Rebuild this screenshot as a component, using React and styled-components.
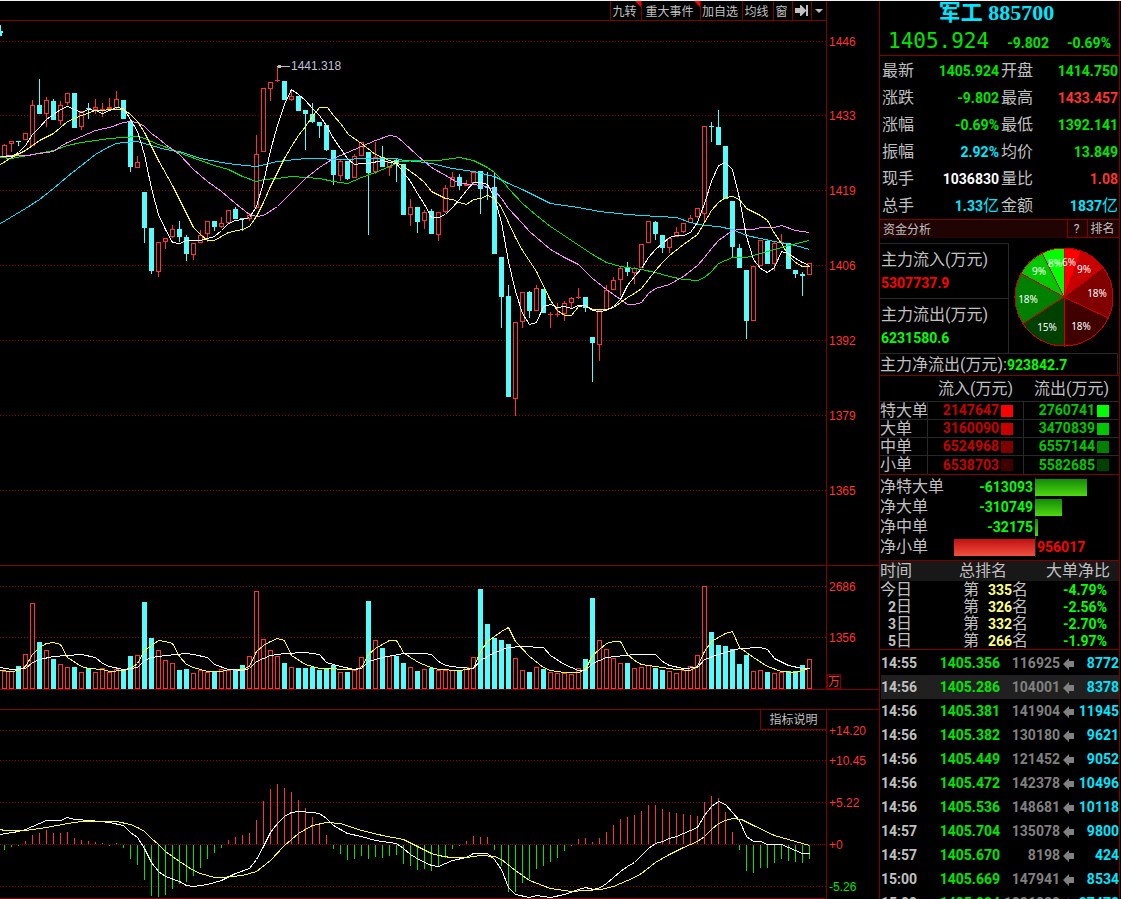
import styled, { createGlobalStyle, css } from 'styled-components'

const LINE = '#800000'
const FAINT = '#282828'
const UP = '#ff3232'
const DOWN = '#54fcfc'
const GREEN = '#00e600'
const LIME = '#00ff00'
const CYAN = '#00e6ff'
const GREY = '#c0c0c0'

const GlobalStyle = createGlobalStyle`
  * {
    box-sizing: border-box;
  }
  body {
    margin: 0;
    background: black;
    color: ${GREY};
    overflow: hidden;
    font-family: Roboto, 'Noto Sans CJK SC', sans-serif;
  }
  button {
    font: inherit;
    color: inherit;
    background: transparent;
    border: 0;
    margin: 0;
    padding: 0;
    cursor: pointer;
  }
  table {
    border-collapse: separate;
    border-spacing: 0;
    table-layout: fixed;
    width: 100%;
  }
  td, th {
    padding: 0;
    font-weight: normal;
    text-align: left;
    white-space: nowrap;
  }
  h1, h2, dl, dt, dd, p {
    margin: 0;
    font-weight: normal;
  }
`

const Page = styled.div`
  display: flex;
  height: 100vh;
  border-top: 1px solid #f0f0f0;
  padding-right: 1px;
  overflow: hidden;
`

const Charts = styled.main`
  flex: 1;
  min-width: 0;
`

const ChartRow = styled.div`
  display: grid;
  grid-template-columns: minmax(0, 1fr) 52px;
`

const Toolbar = styled.div`
  display: flex;
  justify-content: flex-end;
  height: 20px;
  border-right: 1px solid ${LINE};
  border-bottom: 1px solid ${LINE};
`

const ToolButton = styled.button`
  position: relative;
  display: flex;
  align-items: center;
  justify-content: center;
  width: ${props => props.$width}px;
  border-left: 1px solid ${LINE};
  padding: 2px 3px 0 0;
  font-size: 12px;
  line-height: 18px;
  white-space: nowrap;
  svg {
    margin: 0 0 2px 2px;
  }
  ${props => props.$flag && css`
    &::after {
      content: '';
      position: absolute;
      top: 0;
      right: 0;
      border-top: 6px solid red;
      border-left: 6px solid transparent;
    }
  `}
`

const Plot = styled.div`
  position: relative;
  border-right: 1px solid ${LINE};
  border-top: ${props => props.$top ? `1px solid ${LINE}` : '0'};
  border-bottom: 1px solid ${LINE};
  svg {
    display: block;
    width: 100%;
  }
`

const Axis = styled.div`
  border-top: ${props => props.$top ? `1px solid ${LINE}` : '0'};
  border-bottom: ${props => props.$bottom ? `1px solid ${LINE}` : '0'};
  svg {
    display: block;
  }
  text {
    font-family: 'Liberation Sans', 'Noto Sans CJK SC', sans-serif;
    font-size: 12px;
  }
`

const Gap = styled.div`
  height: 19px;
`

const HelpButton = styled.button`
  position: absolute;
  top: 0;
  right: 0;
  width: 66px;
  height: 20px;
  border-left: 1px solid ${LINE};
  border-bottom: 1px solid ${LINE};
  padding-top: 1px;
  background: black;
  font-size: 12px;
  line-height: 19px;
`

const Side = styled.aside`
  display: flex;
  flex-direction: column;
  width: 241px;
  border-left: 1px solid ${LINE};
  border-right: 1px solid ${LINE};
`

const Title = styled.h1`
  height: 26px;
  font-family: 'Liberation Serif', 'Noto Sans CJK SC', serif;
  font-size: 22px;
  font-weight: bold;
  line-height: 24px;
  text-align: center;
  padding-right: 6px;
  color: ${CYAN};
`

const PriceLine = styled.div`
  display: flex;
  align-items: center;
  justify-content: space-between;
  height: 29px;
  padding: 4px 8px 0 8px;
  border-bottom: 1px solid ${LINE};
  color: ${GREEN};
  font-size: 14px;
  font-weight: bold;
`

const Price = styled.span`
  font-family: 'DejaVu Sans Mono', monospace;
  font-size: 21px;
  font-weight: normal;
  padding-bottom: 4px;
`

const Quotes = styled.dl`
  display: grid;
  grid-template-columns: 119px 119px;
  padding-top: 1px;
  border-bottom: 1px solid ${LINE};
`

const Quote = styled.div`
  display: flex;
  justify-content: space-between;
  align-items: center;
  height: 27px;
  padding-left: 2px;
  font-size: 16px;
  line-height: 27px;
`

const Num = styled.span`
  font-size: 14px;
  font-weight: bold;
  color: ${props => props.$color};
`

const Unit = styled.span`
  font-size: 16px;
  font-weight: normal;
`

const SectionBar = styled.div`
  display: flex;
  height: 18px;
  background: #200404;
  font-size: 12px;
  h2 {
    flex: 1;
    padding-left: 3px;
    font-size: 12px;
    line-height: 20px;
  }
  button {
    border-left: 1px solid ${LINE};
    border-bottom: 1px solid ${LINE};
    padding: 1px 2px 0 0;
    line-height: 17px;
  }
`

const BarButton = styled.button`
  width: ${props => props.$width}px;
`

const Flow = styled.div`
  display: grid;
  grid-template-columns: 129px 1fr;
  margin-top: 5px;
`

const FlowCell = styled.div`
  height: 55px;
  border-top: 1px solid ${FAINT};
  border-right: 1px solid ${FAINT};
  padding: 4px 0 0 1px;
  font-size: 16px;
  line-height: 24px;
  p {
    height: 24px;
  }
  ${Num} {
    display: block;
    line-height: 22px;
  }
`

const Pie = styled.svg`
  display: block;
  text {
    font-family: 'Noto Sans', sans-serif;
    font-size: 10px;
    fill: white;
    text-anchor: middle;
  }
`

const NetFlow = styled.div`
  height: 22px;
  margin-right: 1px;
  border-top: 1px solid ${FAINT};
  border-right: 1px solid ${FAINT};
  font-size: 16px;
  line-height: 21px;
  white-space: nowrap;
`

const OrderTable = styled.table`
  border-top: 1px solid ${LINE};
  border-bottom: 1px solid ${LINE};
  font-size: 16px;
  th, td {
    height: 18px;
    line-height: 17px;
    border-top: 1px solid ${FAINT};
  }
  td, tbody th {
    border-left: 1px solid ${FAINT};
  }
  tbody th {
    border-left: 0;
  }
  tbody tr:last-child > * {
    height: 19px;
    line-height: 18px;
  }
  thead th {
    height: 25px;
    line-height: 25px;
    padding-left: 11px;
    border-top: 0;
  }
`

const Amount = styled.div`
  display: flex;
  align-items: center;
  justify-content: flex-end;
  gap: 2px;
  padding-right: ${props => props.$pad}px;
`

const Swatch = styled.i`
  width: 12px;
  height: 12px;
  background: ${props => props.$color};
`

const NetList = styled.dl`
  height: 86px;
  padding-top: 2px;
  border-bottom: 1px solid ${LINE};
`

const NetRow = styled.div`
  display: grid;
  grid-template-columns: 155px 1fr;
  height: 20px;
  font-size: 16px;
  line-height: 20px;
  > dt, > dd {
    grid-row: 1;
  }
  > dt {
    grid-column: 1;
  }
`

const NetSide = styled.dd`
  grid-column: ${props => props.$right ? 2 : 1};
  display: flex;
  align-items: center;
  justify-content: ${props => props.$right ? 'flex-start' : 'flex-end'};
  border-left: ${props => props.$right ? `1px solid ${FAINT}` : '0'};
  padding-right: ${props => props.$text ? 2 : 0}px;
  > span {
    padding-left: 1px;
  }
`

const NetBar = styled.div`
  height: 17px;
  margin-left: -1px;
  background: ${props => props.$up
    ? 'linear-gradient(#c01010, #f05040)'
    : 'linear-gradient(#128a08, #50d810)'};
`

const RankTable = styled.table`
  border-bottom: 1px solid ${LINE};
  font-size: 16px;
  thead th {
    height: 20px;
    line-height: 20px;
    background: #181818;
  }
  td {
    height: 17px;
    line-height: 17px;
  }
`

const Day = styled.div`
  width: 32px;
  height: 17px;
  text-align: right;
`

const Place = styled.div`
  height: 17px;
  display: flex;
  justify-content: space-between;
  width: 69px;
`

const Right = styled.div`
  text-align: right;
  height: 17px;
  padding-right: 12px;
`

const Ticks = styled.div`
  flex: 1 1 0;
  min-height: 0;
  overflow: hidden;
  padding: 1px 0 0 1px;
`

const Tick = styled.tr`
  background: ${props => props.$active ? '#202020' : 'transparent'};
  font-size: 14px;
  font-weight: bold;
  td {
    height: 24px;
    line-height: 24px;
    font-weight: bold;
    text-align: right;
  }
  td:first-child {
    text-align: left;
  }
  svg {
    display: block;
    margin: 2px auto 0;
  }
`

const TickCell = styled.td`
  color: ${props => props.$color};
`

// One candle per row: rising, body top, body bottom, high, low
const candles = [
  [1,145,158,144,158],[1,141,144,141,152],[0,141,142,141,146],[1,133,140,133,140],[1,105,146,100,146],
  [0,105,114,79,114],[1,100,114,97,127],[0,101,120,99,120],[1,105,121,101,125],[1,93,103,93,105],
  [0,93,128,93,128],[1,111,127,111,130],[0,108,109,103,119],[1,107,110,99,114],[1,109,110,103,117],
  [1,107,109,98,109],[1,99,108,91,109],[0,100,119,100,119],[0,121,167,121,172],[1,162,168,156,168],
  [0,192,228,192,243],[0,228,271,228,274],[1,242,272,242,277],[1,238,242,238,249],[1,229,237,225,238],
  [0,229,237,221,242],[0,237,254,235,261],[1,243,255,243,260],[1,235,243,230,243],[1,221,234,221,242],
  [0,221,227,221,231],[1,223,227,217,228],[1,210,223,210,223],[0,209,219,207,219],[0,218,219,218,231],
  [1,215,219,213,221],[1,154,208,135,209],[1,88,152,88,152],[1,82,89,82,101],[1,80,81,66,82],
  [0,81,100,81,100],[1,96,100,91,101],[0,96,111,96,111],[0,110,114,110,150],[0,114,122,103,123],
  [0,122,126,122,138],[0,125,150,125,151],[0,150,175,150,185],[1,161,176,159,181],[0,161,179,161,180],
  [1,156,178,154,178],[1,142,156,142,156],[0,152,173,152,235],[1,157,172,142,174],[0,157,167,146,167],
  [1,162,168,162,176],[0,160,163,159,182],[0,164,215,164,215],[1,207,215,199,226],[0,207,222,207,233],
  [1,212,221,210,229],[0,211,234,209,234],[1,212,235,212,241],[1,188,212,185,213],[1,177,187,172,187],
  [0,177,186,174,190],[1,184,186,180,186],[1,172,183,172,184],[0,171,189,171,214],[0,187,188,172,200],
  [0,187,254,173,254],[0,257,297,257,328],[0,296,397,285,397],[1,322,399,322,416],[1,292,322,292,328],
  [0,292,311,291,318],[1,288,311,285,311],[0,289,313,289,313],[1,314,315,312,328],[1,314,315,303,317],
  [1,303,314,301,321],[1,298,303,297,308],[1,297,298,288,299],[0,297,308,297,312],[0,337,343,337,382],
  [1,310,345,310,361],[1,290,310,285,310],[1,280,290,277,290],[1,268,280,267,296],[0,267,272,262,276],
  [1,268,273,267,284],[1,244,268,244,268],[1,221,243,221,243],[0,222,234,221,240],[0,235,248,235,253],
  [1,238,248,238,253],[1,232,237,227,237],[1,223,232,223,233],[1,218,223,215,223],[1,208,217,208,218],
  [1,126,214,126,223],[0,126,127,122,142],[0,127,145,110,145],[0,146,199,146,199],[0,201,247,201,258],
  [0,248,268,244,268],[0,270,321,270,339],[1,266,321,266,321],[1,240,266,240,266],[0,241,264,241,264],
  [1,243,264,241,271],[1,242,243,234,243],[0,243,269,243,269],[0,270,274,270,278],[0,274,276,272,296],
  [1,263,275,263,275],
]

const volumes = [
  671,671,666,654,603,642,650,659,664,667,667,672,668,672,668,672,669,670,656,655,602,638,650,660,663,
  670,669,673,670,672,671,669,670,670,665,656,591,639,650,656,663,667,668,668,667,670,669,665,672,672,
  670,657,601,640,648,656,656,663,667,671,669,668,670,670,670,670,667,657,589,624,638,640,644,658,670,
  672,667,669,672,673,673,674,668,659,598,640,649,658,663,663,668,667,665,668,670,671,673,670,666,655,
  586,632,645,646,649,664,655,671,670,672,673,672,671,671,665,659,
]

const macd = [
  850,847,845,841,835,833,830,833,833,832,838,840,841,842,843,845,843,848,859,865,880,896,897,895,889,
  884,882,876,868,859,853,848,840,837,835,833,820,801,789,784,788,792,800,808,817,825,835,849,854,860,
  859,856,859,857,858,856,855,864,866,870,869,871,867,858,849,845,841,836,837,837,850,866,892,892,883,
  879,869,866,862,858,851,845,839,838,842,838,832,825,819,817,815,811,805,805,809,812,813,814,815,816,
  802,796,798,812,832,850,871,873,868,868,863,859,861,862,863,859,
]

const priceLines = [
  ['#00e6ff', '0,223 25,208 39,199 53,188 67,176 81,165 95,154 109,146 116,143 123,142 137,141 151,145 165,149 179,151 200,158 221,162 235,164 256,166 277,161 305,158 347,159 361,158 396,158 403,160 417,161 431,163 452,168 473,171 494,176 508,183 522,189 536,196 550,203 564,205 578,207 599,211 627,214 641,215 676,217 690,222 704,225 718,226 732,229 746,235 760,238 774,241 795,245 809,249'],
  ['#00e600', '0,157 11,158 32,154 53,150 67,145 81,142 95,140 109,138 137,136 144,138 158,144 172,149 186,155 200,160 214,165 228,169 242,176 256,181 263,179 277,178 291,176 319,178 333,181 347,183 361,177 375,172 389,166 400,161 417,160 438,160 459,157 473,160 487,167 494,172 501,179 508,188 522,203 536,215 550,226 571,240 592,254 606,262 620,266 641,269 655,272 669,276 683,279 697,280 704,277 711,271 718,263 732,257 746,257 760,253 774,249 788,245 809,240'],
  ['#ff8cff', '0,156 11,155 27,155 39,153 53,151 60,146 67,142 81,136 95,130 109,127 123,122 130,121 137,122 144,126 151,133 158,138 165,144 179,154 193,169 207,181 221,191 235,203 249,214 256,216 263,215 277,206 291,192 305,178 319,167 333,158 347,152 361,146 375,140 389,135 396,136 403,142 417,155 431,167 445,175 459,183 473,184 487,186 494,190 501,198 508,208 522,223 529,231 536,237 550,249 564,257 578,264 592,278 606,289 620,299 627,304 634,304 641,302 648,293 655,288 669,284 683,276 697,265 704,257 711,248 718,240 732,230 739,229 753,229 760,227 774,227 781,225 795,230 809,232'],
  ['#ffff20', '0,164 11,157 25,150 39,140 53,133 67,121 81,115 95,110 102,110 109,109 123,109 130,114 137,121 144,132 158,160 172,185 186,213 193,227 200,234 207,240 214,240 221,236 228,232 242,229 249,226 256,216 263,202 270,186 277,172 284,158 291,146 298,135 305,126 312,116 319,107 327,107 333,115 340,123 348,134 361,143 375,154 389,160 396,162 403,166 410,171 417,176 424,182 431,191 445,198 452,199 459,202 466,204 473,199 480,198 487,195 494,198 501,207 508,222 515,237 522,250 536,271 550,300 557,310 564,315 571,315 578,306 585,305 592,309 606,309 613,307 620,302 627,297 634,293 641,288 648,279 655,270 662,262 669,255 683,244 697,234 704,222 711,210 718,202 725,197 732,196 739,199 746,208 760,215 767,220 774,233 781,243 788,255 795,262 802,266 809,266'],
  ['#ffffff', '0,156 11,156 18,152 25,145 32,134 39,127 46,119 53,114 60,109 67,106 74,109 81,112 88,109 95,110 102,113 109,110 116,107 123,108 130,119 137,131 144,154 151,188 158,214 165,229 172,242 179,243 186,240 200,240 207,238 214,236 221,230 228,223 235,220 242,219 249,217 256,206 263,182 270,150 277,125 284,104 291,89 298,94 305,100 312,108 319,115 326,125 333,138 340,148 347,158 354,164 361,163 368,163 382,160 389,162 396,163 403,172 410,181 417,193 424,204 431,217 438,217 445,214 452,207 459,199 466,190 473,182 480,182 487,184 494,197 501,222 508,261 515,291 522,313 529,324 536,322 543,306 550,304 557,307 564,306 571,308 578,305 585,305 592,310 599,311 606,310 613,306 620,299 627,285 634,276 641,268 648,257 655,249 662,243 669,237 676,235 683,235 690,232 697,222 704,203 711,181 718,165 725,162 732,169 739,198 746,236 753,259 760,268 767,272 774,267 781,251 788,253 795,258 802,262 809,265'],
]

const volumeLines = [
  ['#ffff20', '0,670 11,671 18,670 25,666 32,654 39,647 46,643 53,642 60,644 67,657 81,666 88,668 102,669 109,671 123,670 130,668 137,663 144,650 151,645 158,640 165,641 172,643 179,656 186,664 193,667 207,671 221,671 228,669 242,669 249,666 256,651 263,645 270,641 277,638 284,640 291,655 305,664 319,668 354,669 361,667 368,654 375,648 382,644 389,640 396,640 403,652 410,657 420,663 431,667 438,669 459,670 473,668 480,651 487,641 494,636 501,631 508,627 515,641 529,656 543,667 550,670 564,672 578,672 585,669 592,655 599,649 606,643 613,641 620,641 627,654 634,660 641,664 655,666 676,669 690,670 697,666 704,651 711,641 718,637 725,633 732,631 739,647 753,657 767,666 781,671 795,672 802,670 808,668'],
  ['#ffffff', '0,667 11,669 25,668 32,662 39,659 53,656 67,655 81,654 95,657 102,663 109,666 123,669 137,667 144,660 151,657 165,655 186,653 193,654 207,657 214,664 228,669 242,670 249,668 256,661 270,655 284,653 305,652 319,654 326,662 340,666 354,669 361,668 368,661 382,657 403,653 424,653 431,654 438,661 445,665 459,667 473,668 480,660 494,652 508,647 522,646 543,647 550,655 564,664 578,670 585,670 592,663 606,657 634,654 655,654 662,661 669,665 683,668 697,667 704,659 718,654 739,648 760,647 767,649 774,658 788,665 802,668 809,668'],
]

const macdLines = [
  ['#ffffff', '0,834 18,831 25,829 32,826 46,820 60,820 67,817 74,819 90,820 109,822 123,825 130,832 137,837 144,848 151,862 158,871 165,876 179,881 186,885 193,886 207,884 221,880 235,873 249,868 256,859 263,846 270,832 277,823 284,816 291,812 298,811 312,812 319,813 326,818 333,825 347,833 361,836 375,840 396,843 403,848 410,854 420,860 431,865 438,866 452,860 466,857 473,853 487,853 494,859 501,869 508,887 515,894 529,897 536,895 550,897 564,894 578,889 585,887 593,889 600,887 606,883 613,877 620,871 627,866 634,862 641,855 648,848 655,843 662,841 669,838 676,836 697,827 704,815 711,806 718,801 725,804 732,812 739,820 746,836 753,841 760,841 767,844 781,844 795,850 802,853 809,853'],
  ['#ffff20', '0,829 4,830 25,830 46,827 67,823 81,821 116,821 130,824 137,827 144,831 151,838 158,844 165,851 179,861 193,870 200,873 214,877 221,877 242,875 256,871 270,860 284,845 298,833 312,825 326,822 340,823 361,830 382,835 403,839 417,846 431,853 438,855 450,857 466,857 480,855 494,856 501,859 515,870 529,880 550,888 571,891 585,890 600,889 613,886 634,877 641,873 655,862 669,854 683,847 697,841 704,836 711,829 718,823 725,820 732,818 741,819 753,825 774,835 795,841 809,845'],
]

const priceAxis = [[41, '1446'], [115, '1433'], [190, '1419'], [265, '1406'], [340, '1392'], [415, '1379'], [490, '1365']]
const volumeAxis = [[586, '2686'], [637, '1356']]
const macdAxis = [[730, '+14.20'], [760, '+10.45'], [802, '+5.22'], [844, '+0'], [886, '-5.26']]

const quotes = [
  ['最新', '1405.924', GREEN], ['开盘', '1414.750', GREEN],
  ['涨跌', '-9.802', GREEN], ['最高', '1433.457', UP],
  ['涨幅', '-0.69%', GREEN], ['最低', '1392.141', GREEN],
  ['振幅', '2.92%', CYAN], ['均价', '13.849', GREEN],
  ['现手', '1036830', '#ffffff'], ['量比', '1.08', UP],
  ['总手', '1.33', CYAN, '亿'], ['金额', '1837', CYAN, '亿'],
]

const orders = [
  ['特大单', '2147647', '#ff0000', '2760741', '#00ff00'],
  ['大单', '3160090', '#c80000', '3470839', '#00c800'],
  ['中单', '6524968', '#800000', '6557144', '#008000'],
  ['小单', '6538703', '#400000', '5582685', '#004000'],
]

const nets = [
  ['净特大单', '-613093', 52],
  ['净大单', '-310749', 27],
  ['净中单', '-32175', 3],
  ['净小单', '956017', 81, true],
]

const ranks = [
  ['今', '335', '-4.79%'],
  ['2', '326', '-2.56%'],
  ['3', '332', '-2.70%'],
  ['5', '266', '-1.97%'],
]

const ticks = [
  ['14:55', '1405.356', '116925', '8772'],
  ['14:56', '1405.286', '104001', '8378'],
  ['14:56', '1405.381', '141904', '11945'],
  ['14:56', '1405.382', '130180', '9621'],
  ['14:56', '1405.449', '121452', '9052'],
  ['14:56', '1405.472', '142378', '10496'],
  ['14:56', '1405.536', '148681', '10118'],
  ['14:57', '1405.704', '135078', '9800'],
  ['14:57', '1405.670', '8198', '424'],
  ['15:00', '1405.669', '147941', '8534'],
  ['15:00', '1405.924', '1036830', '27478'],
]

// end angle, fill, label, label x, label y
const slices = [
  [20.5, '#ff0000', '6%', 60, 20],
  [52.8, '#c80000', '9%', 75, 27],
  [115.5, '#800000', '18%', 88, 51],
  [180, '#400000', '18%', 72, 84],
  [236.9, '#004000', '15%', 38, 85],
  [298.7, '#008000', '18%', 19, 57],
  [333.4, '#00c800', '9%', 30, 29],
  [360, '#00ff00', '8%', 46, 21],
]

const candleX = i => 4 + 7 * i

const Grid = ({ levels }) => levels.map(([y]) =>
  <line key={y} x1="0" x2="826" y1={y + 0.5} y2={y + 0.5} stroke="#900000" strokeDasharray={y === 844 ? '1 1' : '1 2'} />
)

const Lines = ({ lines }) => (
  <g transform="translate(0.5 0.5)" fill="none">
    {lines.map(([color, points]) => <polyline key={color} points={points} stroke={color} />)}
  </g>
)

const Bar = ({ x, top, bottom, up }) => up
  ? <rect x={x - 1.5} y={top + 0.5} width="4" height={Math.max(bottom - top - 1, 0.01)} fill="black" stroke={UP} />
  : <rect x={x - 2} y={top} width="5" height={bottom - top} fill={DOWN} />

const Canvas = ({ top, height, children }) => (
  <svg viewBox={`0 ${top} 826 ${height}`} height={height} preserveAspectRatio="none" shapeRendering="crispEdges">
    {children}
  </svg>
)

const Scale = ({ top, height, levels, children }) => (
  <svg width="52" height={height} viewBox={`0 ${top} 52 ${height}`}>
    {levels.map(([y, label]) =>
      <text key={y} x="2" y={y + 5} fill={label[0] === '-' ? GREEN : UP}>{label}</text>
    )}
    {children}
  </svg>
)

const PriceChart = () => (
  <ChartRow>
    <Plot>
      <Canvas top={21} height={544}>
        <Grid levels={priceAxis} />
        {candles.map(([up, top, bottom, high, low], i) => {
          const x = candleX(i)
          return (
            <g key={i}>
              <rect x={x} y={high} width="1" height={low - high} fill={up ? UP : DOWN} />
              <Bar x={x} top={top} bottom={bottom} up={up} />
            </g>
          )
        })}
        <Lines lines={priceLines} />
        <path d="M0 25h1v6h2v2h-1v3h-2z" fill={DOWN} />
        <path d="M277 66h13v1h-13zM278 65h3v3h-3z" fill={GREY} />
        <text x="291" y="70" fill="#c0c0d8" fontSize="12" fontFamily="Liberation Sans, sans-serif">1441.318</text>
      </Canvas>
    </Plot>
    <Axis $bottom>
      <Scale top={21} height={544} levels={priceAxis} />
    </Axis>
  </ChartRow>
)

const VolumeChart = () => (
  <ChartRow>
    <Plot>
      <Canvas top={566} height={123}>
        <Grid levels={volumeAxis} />
        {volumes.map((top, i) => <Bar key={i} x={candleX(i)} top={top} bottom={689} up={candles[i][0]} />)}
        <Lines lines={volumeLines} />
      </Canvas>
    </Plot>
    <Axis $bottom>
      <Scale top={566} height={123} levels={volumeAxis}>
        <rect x="0.5" y="674.5" width="13" height="14" fill="none" stroke={LINE} />
        <text x="1" y="686" fill={UP}>万</text>
      </Scale>
    </Axis>
  </ChartRow>
)

const MacdChart = () => (
  <ChartRow>
    <Plot $top>
      <Canvas top={710} height={188}>
        <Grid levels={macdAxis} />
        {macd.map((y, i) => y < 843
          ? <rect key={i} x={candleX(i)} y={y} width="1" height={844 - y} fill={UP} />
          : <rect key={i} x={candleX(i)} y={Math.min(y, 845)} width="1" height={Math.max(y - 845, 1)} fill={GREEN} />
        )}
        <Lines lines={macdLines} />
      </Canvas>
      <HelpButton>指标说明</HelpButton>
    </Plot>
    <Axis $top>
      <Scale top={710} height={188} levels={macdAxis} />
    </Axis>
  </ChartRow>
)

const FlowPie = () => {
  const point = deg => {
    const rad = deg * Math.PI / 180
    return `${55 + 49 * Math.sin(rad)} ${54 - 49 * Math.cos(rad)}`
  }
  return (
    <Pie width="108" height="108" viewBox="0 0 108 108">
      {slices.map(([end, fill], i) => (
        <path
          key={end}
          d={`M55 54L${point(i ? slices[i - 1][0] : 0)}A49 49 0 0 1 ${point(end)}z`}
          fill={fill}
          stroke="#c80000"
          shapeRendering="crispEdges"
        />
      ))}
      {slices.map(([end, , label, x, y]) => <text key={end} x={x} y={y + 3}>{label}</text>)}
    </Pie>
  )
}

const FundFlow = () => (
  <>
    <Flow>
      <div>
        <FlowCell><p>主力流入(万元)</p><Num $color="#ff0000">5307737.9</Num></FlowCell>
        <FlowCell><p>主力流出(万元)</p><Num $color={LIME}>6231580.6</Num></FlowCell>
      </div>
      <FlowPie />
    </Flow>
    <NetFlow>主力净流出(万元):<Num $color={LIME}>923842.7</Num></NetFlow>
    <OrderTable>
      <colgroup><col width="47" /><col width="96" /><col /></colgroup>
      <thead>
        <tr><th /><th scope="col">流入(万元)</th><th scope="col">流出(万元)</th></tr>
      </thead>
      <tbody>
        {orders.map(([name, inflow, inColor, outflow, outColor]) => (
          <tr key={name}>
            <th scope="row">{name}</th>
            <td><Amount $pad={10}><Num $color="#c80000">{inflow}</Num><Swatch $color={inColor} /></Amount></td>
            <td><Amount $pad={10}><Num $color="#00c800">{outflow}</Num><Swatch $color={outColor} /></Amount></td>
          </tr>
        ))}
      </tbody>
    </OrderTable>
    <NetList>
      {nets.map(([name, value, width, up]) => {
        const bar = <NetBar $up={up} style={{ width }} />
        const text = <Num $color={up ? '#ff0000' : LIME}>{value}</Num>
        return (
          <NetRow key={name}>
            <dt>{name}</dt>
            <NetSide $text={!up}>{up ? bar : text}</NetSide>
            <NetSide $right>{up ? text : bar}</NetSide>
          </NetRow>
        )
      })}
    </NetList>
  </>
)

const Ranks = () => (
  <RankTable>
    <colgroup><col width="79" /><col width="87" /><col /></colgroup>
    <thead>
      <tr><th scope="col">时间</th><th scope="col">总排名</th><th scope="col">大单净比</th></tr>
    </thead>
    <tbody>
      {ranks.map(([day, place, ratio]) => (
        <tr key={day}>
          <td><Day>{day === '今' ? day : <Num $color={GREY}>{day}</Num>}日</Day></td>
          <td><Place><span>&nbsp;第</span><span><Num $color="#ffff80">{place}</Num>名</span></Place></td>
          <td><Right><Num $color={LIME}>{ratio}</Num></Right></td>
        </tr>
      ))}
    </tbody>
  </RankTable>
)

const TickList = () => (
  <Ticks>
    <table>
      <colgroup><col width="50" /><col width="69" /><col width="60" /><col width="18" /><col /></colgroup>
      <tbody>
        {ticks.map(([time, price, volume, count], i) => (
          <Tick key={i} $active={i === 1}>
            <td>{time}</td>
            <TickCell $color={GREEN}>{price}</TickCell>
            <TickCell $color="#808080">{volume}</TickCell>
            <td>
              <svg width="12" height="12" viewBox="0 0 12 12">
                <path d="M0 6L6 0V3H11V9H6V12z" fill="#808080" />
              </svg>
            </td>
            <TickCell $color={CYAN}>{count}</TickCell>
          </Tick>
        ))}
      </tbody>
    </table>
  </Ticks>
)

export default function App() {
  return (
    <>
      <GlobalStyle />
      <Page>
        <Charts>
          <ChartRow>
            <Toolbar>
              <ToolButton $width={31} $flag>九转</ToolButton>
              <ToolButton $width={59} $flag>重大事件</ToolButton>
              <ToolButton $width={42}>加自选</ToolButton>
              <ToolButton $width={31}>均线</ToolButton>
              <ToolButton $width={19}>窗</ToolButton>
              <ToolButton $width={19} aria-label="last">
                <svg width="13" height="12" viewBox="0 0 13 12" fill={GREY}>
                  <path d="M0 3h5V0h1l5 5v1l-5 5H5V8H0zM11 0h2v11h-2z" />
                </svg>
              </ToolButton>
              <ToolButton $width={15} aria-label="more">
                <svg width="8" height="4" viewBox="0 0 8 4" fill={GREY}>
                  <path d="M0 0h8L4 4z" />
                </svg>
              </ToolButton>
            </Toolbar>
          </ChartRow>
          <PriceChart />
          <VolumeChart />
          <Gap />
          <MacdChart />
        </Charts>
        <Side>
          <Title>军工 885700</Title>
          <PriceLine><Price>1405.924</Price><span>-9.802</span><span>-0.69%</span></PriceLine>
          <Quotes>
            {quotes.map(([label, value, color, unit]) => (
              <Quote key={label}>
                <dt>{label}</dt>
                <dd><Num $color={color}>{value}{unit && <Unit>{unit}</Unit>}</Num></dd>
              </Quote>
            ))}
          </Quotes>
          <SectionBar>
            <h2>资金分析</h2>
            <BarButton $width={20}>?</BarButton>
            <BarButton $width={32}>排名</BarButton>
          </SectionBar>
          <FundFlow />
          <Ranks />
          <TickList />
        </Side>
      </Page>
    </>
  )
}
